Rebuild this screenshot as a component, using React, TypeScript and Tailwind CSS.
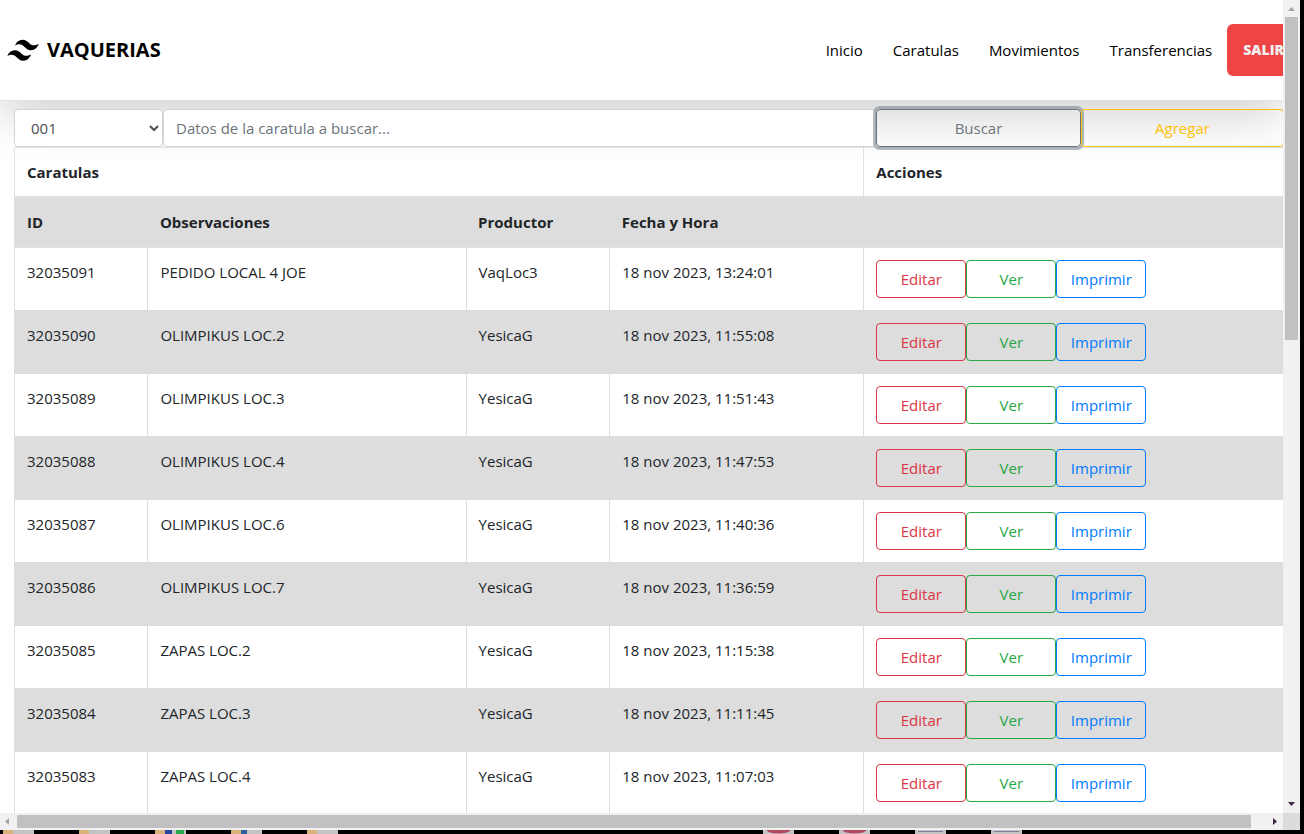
import { useState } from 'react';

type Caratula = {
  id: number;
  observaciones: string;
  productor: string;
  fecha: string;
};

const caratulas: Caratula[] = [
  { id: 32035091, observaciones: 'PEDIDO LOCAL 4 JOE', productor: 'VaqLoc3', fecha: '18 nov 2023, 13:24:01' },
  { id: 32035090, observaciones: 'OLIMPIKUS LOC.2', productor: 'YesicaG', fecha: '18 nov 2023, 11:55:08' },
  { id: 32035089, observaciones: 'OLIMPIKUS LOC.3', productor: 'YesicaG', fecha: '18 nov 2023, 11:51:43' },
  { id: 32035088, observaciones: 'OLIMPIKUS LOC.4', productor: 'YesicaG', fecha: '18 nov 2023, 11:47:53' },
  { id: 32035087, observaciones: 'OLIMPIKUS LOC.6', productor: 'YesicaG', fecha: '18 nov 2023, 11:40:36' },
  { id: 32035086, observaciones: 'OLIMPIKUS LOC.7', productor: 'YesicaG', fecha: '18 nov 2023, 11:36:59' },
  { id: 32035085, observaciones: 'ZAPAS LOC.2', productor: 'YesicaG', fecha: '18 nov 2023, 11:15:38' },
  { id: 32035084, observaciones: 'ZAPAS LOC.3', productor: 'YesicaG', fecha: '18 nov 2023, 11:11:45' },
  { id: 32035083, observaciones: 'ZAPAS LOC.4', productor: 'YesicaG', fecha: '18 nov 2023, 11:07:03' },
];

const links = ['Inicio', 'Caratulas', 'Movimientos', 'Transferencias'];

function Logo() {
  return (
    <svg viewBox="0 0 32 22" className="h-[22px] w-8 shrink-0" fill="#000" aria-hidden="true">
      <path d="M8 6.500C9.500 3 12 .8 15.500.8c3.300 0 5 1.800 7 3.600 2.500 2.200 5.500 2.600 9.500.4-1.700 3.800-4.300 6.400-8 6.400-3.400 0-5-2-7-3.800C14.500 5.100 11.800 4.400 8 6.500z" />
      <path d="M.300 17C1.800 13.500 4.300 11.300 7.800 11.300c3.300 0 5 1.800 7 3.600 2.500 2.200 5.500 2.600 9.500.4-1.700 3.800-4.300 6.400-8 6.400-3.400 0-5-2-7-3.800C6.800 15.600 4.100 14.900.300 17z" />
    </svg>
  );
}

function Header() {
  return (
    <header className="flex h-[101px] items-center border-b border-[#e2e2e2] bg-white pl-[7px] shadow-[0_16px_48px_rgba(0,0,0,0.175)]">
      <a href="#" className="flex items-center gap-2 text-xl font-bold text-black">
        <Logo />
        VAQUERIAS
      </a>
      <nav className="-mr-[17px] ml-auto flex shrink-0 items-center">
        {links.map((link) => (
          <a key={link} href="#" className="px-[15px] text-black">
            {link}
          </a>
        ))}
        <button className="h-[52px] rounded-md bg-[#ef4444] px-4 text-sm font-extrabold text-[#f1f1f1]">SALIR</button>
      </nav>
    </header>
  );
}

function SearchForm() {
  const [local, setLocal] = useState('001');
  const [texto, setTexto] = useState('');

  return (
    <form
      className="-mr-px grid grid-cols-[149fr_713fr_205fr_203fr]"
      onSubmit={(e) => e.preventDefault()}
    >
      <select
        aria-label="Local"
        value={local}
        onChange={(e) => setLocal(e.target.value)}
        className="h-[38px] rounded border border-[#ced4da] bg-white px-3 text-[#495057]"
      >
        <option>001</option>
        <option>002</option>
        <option>003</option>
      </select>
      <input
        type="text"
        aria-label="Datos de la caratula a buscar"
        placeholder="Datos de la caratula a buscar..."
        value={texto}
        onChange={(e) => setTexto(e.target.value)}
        className="h-[38px] min-w-0 rounded border border-[#ced4da] bg-white px-3 text-[#495057] placeholder:text-[#6c757d]"
      />
      <button
        type="submit"
        className="h-[38px] rounded border border-[#6c757d] text-[#6c757d] shadow-[0_0_0_3px_rgba(108,117,125,0.5)]"
      >
        Buscar
      </button>
      <button type="button" className="h-[38px] rounded border border-[#ffc107] text-[#ffc107]">
        Agregar
      </button>
    </form>
  );
}

function CaratulasTable() {
  return (
    <table className="-mr-4 w-[calc(100%+15px)] table-fixed border-collapse border border-[#dee2e6]">
      <colgroup>
        <col className="w-[10.4%]" />
        <col className="w-[24.8%]" />
        <col className="w-[11.2%]" />
        <col className="w-[19.8%]" />
        <col />
      </colgroup>
      <thead>
        <tr className="text-left">
          <th colSpan={4} className="border border-[#dee2e6] p-3">Caratulas</th>
          <th className="border border-[#dee2e6] p-3">Acciones</th>
        </tr>
        <tr className="border-y-2 border-[#dee2e6] bg-[#ddd] text-left">
          <th className="p-3">ID</th>
          <th className="p-3">Observaciones</th>
          <th className="p-3">Productor</th>
          <th className="p-3">Fecha y Hora</th>
          <th className="p-3" />
        </tr>
      </thead>
      <tbody>
        {caratulas.map((c) => (
          <tr key={c.id} className="align-top even:bg-[#ddd]">
            <td className="border border-[#ddd] p-3">{c.id}</td>
            <td className="border border-[#ddd] p-3">{c.observaciones}</td>
            <td className="border border-[#ddd] p-3">{c.productor}</td>
            <td className="border border-[#ddd] p-3">{c.fecha}</td>
            <td className="border border-[#ddd] p-3">
              <div className="flex">
                <button className="h-[38px] w-[90px] rounded border border-[#dc3545] text-[#dc3545]">Editar</button>
                <button className="h-[38px] w-[90px] rounded border border-[#28a745] text-[#28a745]">Ver</button>
                <button className="h-[38px] w-[90px] rounded border border-[#007bff] text-[#007bff]">Imprimir</button>
              </div>
            </td>
          </tr>
        ))}
      </tbody>
    </table>
  );
}

function VerticalScrollbar() {
  return (
    <div className="flex w-[17px] shrink-0 flex-col items-center bg-[#f1f1f1]">
      <svg viewBox="0 0 17 17" className="size-[17px] shrink-0" fill="#a3a3a3">
        <path d="M5 11h7L8.500 7z" />
      </svg>
      <div className="flex w-[13px] flex-1 flex-col">
        <div className="h-[41.5%] bg-[#c1c1c1]" />
      </div>
      <svg viewBox="0 0 17 17" className="size-[17px] shrink-0" fill="#3d2846">
        <path d="M5 6h7l-3.500 4z" />
      </svg>
    </div>
  );
}

function HorizontalScrollbar() {
  return (
    <div className="flex h-[17px] shrink-0 items-center bg-[#f1f1f1]">
      <svg viewBox="0 0 17 17" className="size-[17px] shrink-0" fill="#a3a3a3">
        <path d="M9 5v7L5 8.500z" />
      </svg>
      <div className="h-[13px] flex-1">
        <div className="h-full w-[98.8%] bg-[#c1c1c1]" />
      </div>
      <svg viewBox="0 0 17 17" className="size-[17px] shrink-0" fill="#3d2846">
        <path d="M7 5v7l4-3.500z" />
      </svg>
      <div className="size-[17px] shrink-0 bg-[#dcdcdc]" />
    </div>
  );
}

const slots = ['folder', 'folder', 'color', 'blue', 'folder', '', '', '', '', '', 'red', 'red', 'doc', 'doc'];

// top edge of the desktop icons that show under the window
function DesktopEdge() {
  return (
    <div className="flex h-1 shrink-0 bg-black pl-[3px]">
      {slots.map((slot, i) => (
        <div key={i} className="w-[76px] shrink-0">
          {slot && (
            <svg viewBox="0 0 31 4" className="h-1 w-[31px]">
              <rect width="31" height="4" fill="#c4c4c4" />
              {(slot === 'folder' || slot === 'color' || slot === 'blue') && <rect width="10" height="4" fill="#d9b27c" />}
              {slot === 'color' && <rect x="10" width="7" height="4" fill="#2544a0" />}
              {slot === 'color' && <rect x="21" width="8" height="4" fill="#27a84a" />}
              {slot === 'blue' && <rect x="10" width="6" height="4" fill="#2d5f9e" />}
              {slot === 'red' && <ellipse cx="15.500" cy="0" rx="12" ry="3.500" fill="#b04a60" />}
              {slot === 'doc' && <rect x="3" y="1" width="25" height="1" fill="#7b7f96" />}
            </svg>
          )}
        </div>
      ))}
    </div>
  );
}

export default function App() {
  return (
    <div className="flex h-screen flex-col overflow-hidden bg-black font-['Open_Sans',sans-serif] text-[15px] leading-6 text-[#212529]">
      <div className="flex min-h-0 flex-1 flex-col border-r-4 border-black">
        <div className="flex min-h-0 flex-1">
          <div className="min-w-0 flex-1 overflow-hidden bg-white">
            <Header />
            <main className="pt-2 pl-[14px]">
              <SearchForm />
              <CaratulasTable />
            </main>
          </div>
          <VerticalScrollbar />
        </div>
        <HorizontalScrollbar />
      </div>
      <DesktopEdge />
    </div>
  );
}
